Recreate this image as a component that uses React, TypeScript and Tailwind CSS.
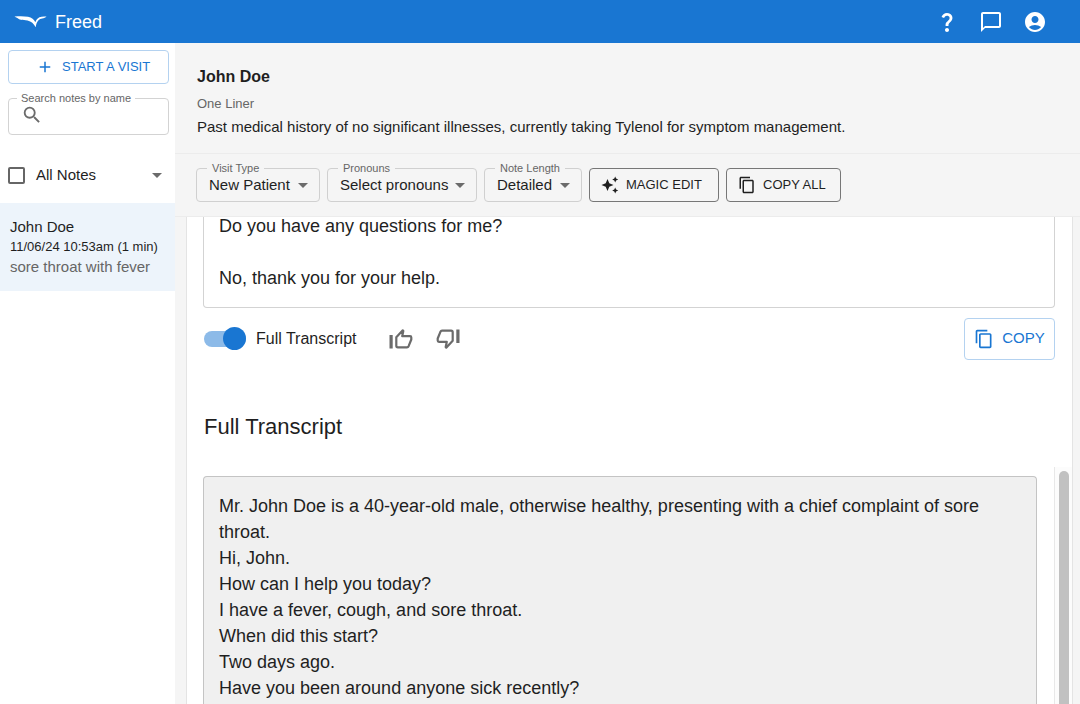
import { useState } from "react"
import type { ReactNode } from "react"
import {
    MdAccountCircle,
    MdAdd,
    MdArrowDropDown,
    MdChatBubbleOutline,
    MdContentCopy,
    MdQuestionMark,
    MdSearch,
} from "react-icons/md"

const transcript = [
    "Mr. John Doe is a 40-year-old male, otherwise healthy, presenting with a chief complaint of sore throat.",
    "Hi, John.",
    "How can I help you today?",
    "I have a fever, cough, and sore throat.",
    "When did this start?",
    "Two days ago.",
    "Have you been around anyone sick recently?",
]

const Thumb = ({ down }: { down?: boolean }) => {
    return <svg width="24" height="22" viewBox="0 0 24 22" fill="none" className={down ? "rotate-180" : ""} aria-hidden="true">
        <rect x="0.500" y="7" width="3.200" height="13.500" fill="currentColor" />
        <path
            d="M7.300 9.300L13.800 2.300L14.300 3L13.200 8.200H21Q22.300 8.200 22.300 9.500V11.500L19.600 18.200Q19.100 19.300 18 19.300H8.800Q7.300 19.300 7.300 17.800Z"
            stroke="currentColor"
            strokeWidth="2.200"
            strokeLinejoin="round"
        />
    </svg>
}

const Sparkles = () => {
    return <svg width="18" height="18" viewBox="0 0 18 18" fill="currentColor" aria-hidden="true">
        <path d="M6.500 3L8.300 7.200L12.500 9L8.300 10.800L6.500 15L4.700 10.800L0.500 9L4.700 7.200Z" />
        <path d="M14.200 0.500L15.100 2.600L17.200 3.500L15.100 4.400L14.200 6.500L13.300 4.400L11.200 3.500L13.300 2.600Z" />
        <path d="M14.200 11.500L15.100 13.600L17.200 14.500L15.100 15.400L14.200 17.500L13.300 15.400L11.200 14.500L13.300 13.600Z" />
    </svg>
}

const AppBar = () => {
    return <header className="flex h-[43px] shrink-0 items-center justify-between bg-[#1976d2] pl-[14px] pr-[33px] text-white">
        <a href="#" className="flex items-center gap-2">
            <svg width="33" height="14" viewBox="0 0 33 14" fill="currentColor" aria-hidden="true">
                <path d="M0.500 1.500C5 1.100 10 1 14 1.800C17.800 2.600 20 4.400 21.300 7.200C22.500 3.900 24.500 2.200 27.500 1.700C29.200 1.500 31 1.400 32.500 1.400C31.500 2.500 30 3 28.200 3.400C25.200 4 23.700 5.500 22.700 8C22.200 9.500 21.900 10.700 21.700 12.300C19.500 8.500 17.500 6.500 13.500 5.500C11 4.900 9 5.200 7 4.700C5.200 4.200 4.200 3.500 3.400 2.900C2.200 2.600 1.200 2.200 0.500 1.500Z" />
            </svg>
            <span className="text-[18px] leading-6">Freed</span>
        </a>
        <div className="flex items-center gap-5">
            <button aria-label="Help"><MdQuestionMark size={24} /></button>
            <button aria-label="Messages"><MdChatBubbleOutline size={24} /></button>
            <button aria-label="Account"><MdAccountCircle size={24} /></button>
        </div>
    </header>
}

const Sidebar = () => {
    return <aside className="flex w-[175px] shrink-0 flex-col bg-white">
        <div className="flex flex-col px-2 pt-[7px] pr-[6px]">
            <button className="flex h-[34px] items-center gap-2 rounded border border-[#b4d2f0] pl-[27px] text-[13px] text-[#1976d2]">
                <MdAdd size={18} />
                START A VISIT
            </button>
            <fieldset className="mt-2 h-[43px] rounded border border-[#d3d3d3] pl-[12px]">
                <legend className="-ml-1 px-1 text-[11px] leading-[12px] text-[#666]">
                    <label htmlFor="search">Search notes by name</label>
                </legend>
                <div className="flex items-center">
                    <MdSearch size={22} className="shrink-0 text-[#6b6b6b]" />
                    <input id="search" className="w-full min-w-0 bg-transparent px-1 text-[14px] outline-none" />
                </div>
            </fieldset>
        </div>
        <div className="mt-[27px] flex h-[26px] items-center pl-2 pr-[6px]">
            <input
                id="all-notes"
                type="checkbox"
                className="h-[17px] w-[17px] appearance-none rounded-[2px] border-2 border-[#666] checked:bg-[#1976d2]"
            />
            <label htmlFor="all-notes" className="ml-[11px] grow text-[15px]">All Notes</label>
            <button aria-label="More filters"><MdArrowDropDown size={24} className="text-[#6b6b6b]" /></button>
        </div>
        <a href="#" className="mt-[15px] block bg-[#edf4fb] px-[10px] pb-[14px] pt-[14px]">
            <div className="text-[15px] leading-5">John Doe</div>
            <div className="text-[13px] leading-5">11/06/24 10:53am (1 min)</div>
            <div className="text-[15px] leading-5 text-[#666]">sore throat with fever</div>
        </a>
    </aside>
}

const Picker = ({ id, label, options, width }: { id: string, label: string, options: string[], width: string }) => {
    return <fieldset className={`relative h-[40px] rounded border border-[#d0d0d0] ${width}`}>
        <legend className="ml-[10px] px-[5px] text-[11px] leading-[12px] text-[#666]">
            <label htmlFor={id}>{label}</label>
        </legend>
        <select id={id} className="block h-[22px] w-full appearance-none bg-transparent pl-3 pr-6 text-[15px] leading-[22px] outline-none">
            {options.map((o) => <option key={o}>{o}</option>)}
        </select>
        <MdArrowDropDown size={24} className="pointer-events-none absolute bottom-1 right-1 text-[#6b6b6b]" />
    </fieldset>
}

const ToolButton = ({ icon, children, width }: { icon: ReactNode, children: ReactNode, width: string }) => {
    return <button className={`flex h-[34px] items-center gap-[7px] rounded border border-[#777] pl-[11px] text-[13px] ${width}`}>
        {icon}
        {children}
    </button>
}

const VisitHeader = () => {
    return <div className="shrink-0 border-b border-[#ececec]">
        <div className="border-b border-[#ececec] px-[22px] pb-[15px] pt-[22px]">
            <h1 className="text-[16px] font-bold leading-6">John Doe</h1>
            <div className="mt-[5px] text-[13px] leading-5 text-[#666]">One Liner</div>
            <p className="mt-[2px] text-[15px] leading-[22px]">
                Past medical history of no significant illnesses, currently taking Tylenol for symptom management.
            </p>
        </div>
        <div className="flex items-end gap-[7px] px-[21px] pb-[14px] pt-2">
            <Picker id="visit-type" label="Visit Type" options={["New Patient", "Follow Up"]} width="w-[124px]" />
            <Picker id="pronouns" label="Pronouns" options={["Select pronouns", "He/Him", "She/Her", "They/Them"]} width="w-[150px]" />
            <Picker id="note-length" label="Note Length" options={["Detailed", "Concise"]} width="w-[98px]" />
            <ToolButton icon={<Sparkles />} width="w-[130px]">MAGIC EDIT</ToolButton>
            <ToolButton icon={<MdContentCopy size={18} />} width="w-[115px]">COPY ALL</ToolButton>
        </div>
    </div>
}

const Note = () => {
    const [show, setShow] = useState(true);
    return <div className="ml-[11px] mr-[7px] flex min-h-0 grow flex-col overflow-hidden border-x border-[#e4e4e4] bg-white">
        <div className="ml-4 mr-[17px] flex h-[91px] shrink-0 flex-col justify-end overflow-hidden rounded-b border border-t-0 border-[#d3d3d3] px-[15px] pb-[16px] text-[18px] leading-[26px]">
            <p>Do you have any questions for me?</p>
            <p className="mt-[26px]">No, thank you for your help.</p>
        </div>
        <div className="mt-[9px] flex h-[43px] shrink-0 items-center px-[17px]">
            <input
                id="full-transcript"
                type="checkbox"
                role="switch"
                checked={show}
                onChange={() => setShow(!show)}
                className="flex h-4 w-[42px] appearance-none items-center rounded-full bg-gray-300 before:h-[23px] before:w-[23px] before:shrink-0 before:rounded-full before:bg-gray-500 checked:justify-end checked:bg-[#8cbae8] checked:before:bg-[#1976d2]"
            />
            <label htmlFor="full-transcript" className="ml-[10px] text-[16px]">Full Transcript</label>
            <button aria-label="Good note" className="ml-[33px] text-[#6b6b6b]"><Thumb /></button>
            <button aria-label="Bad note" className="ml-[23px] text-[#6b6b6b]"><Thumb down /></button>
            <button className="ml-auto flex h-[42px] w-[91px] items-center justify-center gap-2 rounded border border-[#b4d2f0] text-[15px] text-[#1976d2]">
                <MdContentCopy size={20} />
                COPY
            </button>
        </div>
        <h2 className="ml-[17px] mt-[51px] shrink-0 text-[22px] leading-8">Full Transcript</h2>
        {show && <div className="mt-[24px] flex min-h-0 grow">
            <div className="ml-4 mr-[17px] mt-[9px] grow overflow-hidden rounded-t border border-b-0 border-[#c4c4c4] bg-[#f0f0f0] px-[15px] pt-[16px] text-[18px] leading-[26px]">
                {transcript.map((line) => <p key={line}>{line}</p>)}
            </div>
            <div className="w-[18px] shrink-0 border-l border-[#e8e8e8] bg-[#fcfcfc] pl-1 pr-[3px] pt-1">
                <div className="h-full rounded-t-full bg-[#c1c1c1]" />
            </div>
        </div>}
    </div>
}

export default function App() {
    return <div className="flex h-screen flex-col overflow-hidden bg-[#f5f5f5] font-['Liberation_Sans',Arial,sans-serif] text-[#1f1f1f]">
        <AppBar />
        <div className="flex min-h-0 grow">
            <Sidebar />
            <main className="flex min-w-0 grow flex-col">
                <VisitHeader />
                <Note />
            </main>
        </div>
    </div>
}
